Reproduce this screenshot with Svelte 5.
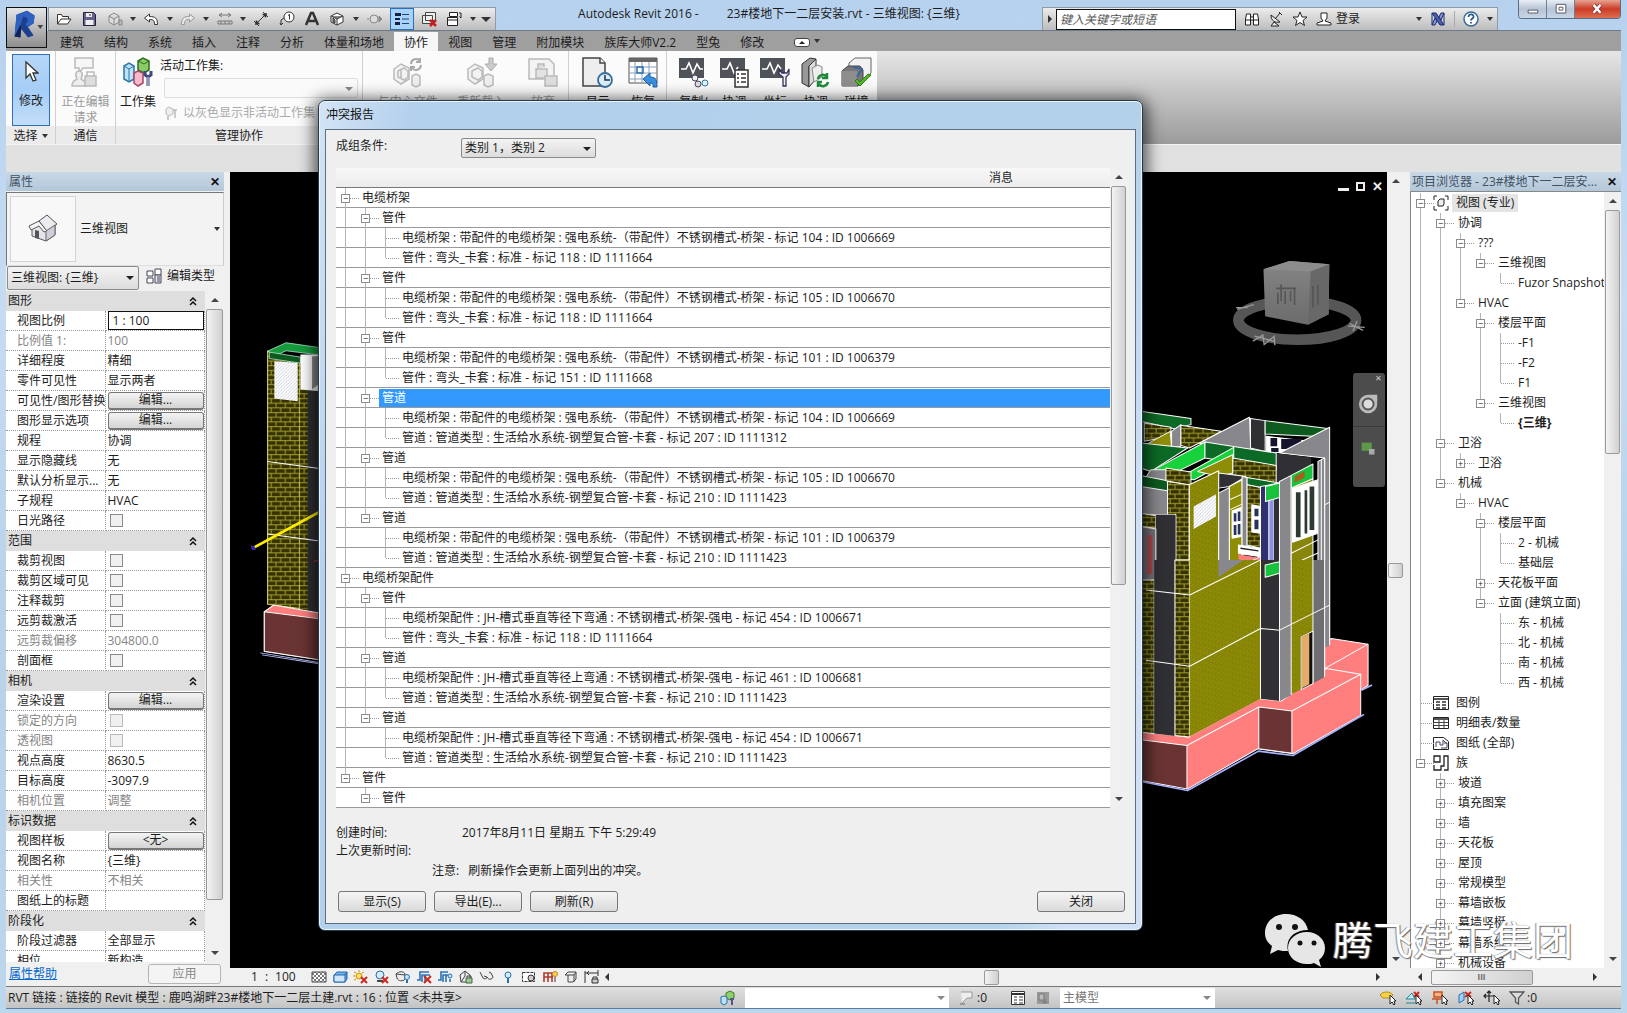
<script>
  const icons = {
    open: '<path d="M1.5 13V3.5h4l1 2h6V8M1.5 13 5 8h10l-3.500 5z" fill="#fff" stroke="#333"/>',
    save: '<path d="M2.500 1.500h10l2 2v11h-12z" fill="#62628a" stroke="#222240"/><path d="M5 2h6v4H5zM4.500 9h8v5h-8z" fill="#eee"/><path d="M9 3v2" stroke="#222" />',
    sync: '<path d="m2 5 5-3 5 3v6l-5 3-5-3zM7 8v6M2 5l5 3 5-3" fill="#ddd" stroke="#888"/><path d="M12 9h3v5h-3z" fill="#bbb" stroke="#888"/>',
    undo: '<path d="m1.500 7 5-4v2.500c6 0 8 2 8 8h-3c0-4-1-5-5-5V11z" fill="#fff" stroke="#333"/>',
    redo: '<path d="m14.500 7-5-4v2.500c-6 0-8 2-8 8h3c0-4 1-5 5-5V11z" fill="#e6e6e6" stroke="#999"/>',
    measure: '<path d="M2 4h12M2 4l3-2M2 4l3 2M14 4l-3-2M14 4l-3 2M1 10h14v3H1zM4 10v3M8 10v3M12 10v3" fill="none" stroke="#777"/>',
    dim: '<path d="M3 13 13 3M1 10l5 5M10 1l5 5" fill="none" stroke="#333"/><path d="m2 14 1-5 4 4zM14 2l-5 1 4 4z" fill="#333"/>',
    tag: '<circle cx="10" cy="6" r="5" fill="#fff" stroke="#333"/><path d="M9 4.500 10.500 3.500v5M5 7 2 9v5M1 12l1 2 2-2" fill="none" stroke="#333"/>',
    text: '<path d="M2 14 7 2h2l5 12M4.500 10h7" fill="none" stroke="#333" stroke-width="2.500"/>',
    cube: '<path d="m2 5 6-3 6 3v6l-6 3-6-3z" fill="#fff" stroke="#333"/><path d="M2 5l6 3 6-3M8 8v6M4 7v4l2 1V9z" fill="#888" stroke="#333"/>',
    section: '<circle cx="8" cy="8" r="4" fill="#ddd" stroke="#888"/><path d="m13 5 3 3-3 3zM1 8h2" fill="#888" stroke="#888"/>',
    thin: '<path d="M1 2h6v3H1zM1 7h5v2H1zM1 11h5v3H1z" fill="#124"/><path d="M8 3.500h7M8 8h7M8 12.500h7" stroke="#246" fill="none"/>',
    closewin: '<path d="M4.500 1.500h10v8h-10zM1.500 4.500h10v8h-10z" fill="#eee" stroke="#444"/><path d="m9 9 6 6m0-6-6 6" stroke="#c81e1e" stroke-width="2.500"/>',
    switchwin: '<path d="M3.500 1.500h8v4h-8zM1.500 6.500h10v8h-10z" fill="#fff" stroke="#222"/><path d="M1.500 9h10M13 2h2v5M13.500 5.500 15 7" fill="none" stroke="#222"/>',
    binoculars: '<path d="M2.500 3h4v11h-5V8zM13.500 3h-4v11h5V8zM6.500 6h3v3h-3zM2 9h4M10 9h4" fill="#fff" stroke="#222"/>',
    dish: '<path d="M3 4c0 6 4 8 9 7zM7 8l5-6M11 1l3 3M6 11l-3 4h8z" fill="#eee" stroke="#222"/>',
    star: '<path d="m8 1 2 5h5l-4 3.500 1.500 5L8 11.500l-4.500 3L5 9.500 1 6h5z" fill="#fff" stroke="#222"/>',
    person: '<path d="M5 2h6v5l-2 3 6 2v2H1v-2l6-2-2-3z" fill="#fff" stroke="#222"/>',
    exchange: '<path d="M2 2h4l8 12h-4z" fill="#4a5fae" stroke="#1d2c6e"/><path d="M14 2h-3L9 6l2 3zM2 14h3l2-4-2-3zM14 2v12M2 2v12" fill="#8796d2" stroke="#1d2c6e"/>',
    help: '<circle cx="8" cy="8" r="7" fill="#fff" stroke="#3a6a98" stroke-width="1.500"/><path d="M5.500 6c0-4 5.500-3 5 0-.3 1.500-2.500 1.500-2.500 3.500M8 11v1.500" fill="none" stroke="#24598c" stroke-width="1.800"/>',
    hatch: '<path d="M1 3h14v10H1z" fill="#fff" stroke="#444"/><path d="m1 6 3-3M1 10l7-7M2 13 12 3M6 13l9-9M10 13l5-5M4 3l10 10M8 3l7 7M12 3l3 3M1 4l9 9M1 8l5 5" stroke="#555" stroke-width=".8"/>',
    bluebox: '<path d="m2 6 3-3h10l-2 3v7H2z" fill="#74b4ea" stroke="#246bb0"/><path d="M2 6h11v7H2z" fill="#cfe6fa" stroke="#246bb0"/><path d="m13 6 2-3v7l-2 3" fill="#4b92d4" stroke="#246bb0"/>',
    sunoff: '<circle cx="6" cy="7" r="3" fill="#ffe06a" stroke="#d09000"/><path d="M6 1v2M1 3l2 1M1 11l2-1M11 3 9 4M0 7h2" stroke="#d09000"/><path d="m8 8 6 6m0-6-6 6" stroke="#cc2a1e" stroke-width="2"/>',
    shadowoff: '<circle cx="6" cy="6" r="4" fill="#d5eaf8" stroke="#2472a8"/><path d="M3 12h6" stroke="#444" stroke-width="2"/><path d="m8 8 6 6m0-6-6 6" stroke="#cc2a1e" stroke-width="2"/>',
    render: '<path d="M1 5c3-3 8-3 9 0v5c-2 3-7 2-8-1zM1 5l9 1" fill="#eee" stroke="#444"/><circle cx="12" cy="8" r="2.500" fill="#cfe6fa" stroke="#2472a8"/><path d="M12 11v3" stroke="#2472a8" stroke-width="2"/>',
    cropoff: '<path d="M1 11h3V3h9M6 13V6h8M9 14V6" fill="none" stroke="#2a72b8" stroke-width="1.600"/><path d="m8 7 7 7m0-7-7 7" stroke="#cc2a1e" stroke-width="2"/>',
    crop: '<path d="M1 11h3V3h7M6 13V6h5M9 13V6" fill="none" stroke="#2a72b8" stroke-width="1.600"/><circle cx="13" cy="7" r="2" fill="#cfe6fa" stroke="#2472a8"/><path d="M13 10v3" stroke="#2472a8" stroke-width="1.500"/>',
    lockview: '<path d="m2 6 5-4 5 4v7H3zM7 2v5l-4 6" fill="#eee" stroke="#444"/><path d="M8 9h6v5H8z" fill="#9fc79a" stroke="#3b6a3b"/><path d="M9 9V7h4v2" fill="none" stroke="#444"/>',
    glasses: '<path d="M1 3 4 9c3 2 4 0 4-1 1 3 5 3 6 0L12 4 10 3M8 8l-3-1" fill="#eee" stroke="#444"/>',
    bulb: '<circle cx="8" cy="6" r="3" fill="#d5eaf8" stroke="#2472a8"/><path d="M8 9v5" stroke="#2472a8" stroke-width="2"/>',
    tempview: '<path d="M1.500 3.500h12v9h-12z" fill="#fff" stroke="#333" stroke-dasharray="3 1"/><circle cx="10" cy="9" r="3" fill="#ccc" stroke="#333"/>',
    analytic: '<path d="M2 13V4h8v9M6 4v9M2 8h9" fill="none" stroke="#b03a2e" stroke-width="1.600"/><circle cx="13" cy="5" r="2.500" fill="#ffd35a" stroke="#c58a10"/><path d="M13 8v5" stroke="#777" stroke-width="1.500"/>',
    displace: '<path d="m2 6 3-3h8v7l-3 3H5V6zM5 6h6v7M11 6l2-3" fill="#eee" stroke="#444"/>',
    constrain: '<path d="M1 2v12M1 4h13M14 1v6M3 4l2-2M3 4l2 2" stroke="#333" fill="none"/><path d="M8 10h6v4H8z" fill="#ccc" stroke="#333"/><path d="M9 10V8h4v2" fill="none" stroke="#333"/>',
    worksets: '<path d="m6 3 4-2 4 2v5l-4 2-4-2z" fill="#8fd06a" stroke="#3a7a2a"/><path d="m1 7 3-1 3 1v6l-3 2-3-2z" fill="#bfe0f8" stroke="#2472a8"/><path d="M10 9h4M12 9v6" stroke="#55558a" stroke-width="2"/>',
    workgray: '<path d="m3 4 3-2 4 2v5l-4 2-3-2z" fill="#eee" stroke="#bbb"/><path d="M10 5h4M12 5v8M5 11v4" stroke="#bbb" stroke-width="1.500"/>',
    pinfilter: '<path d="M3 2h11v6H9l-5 5" fill="#eee" stroke="#999"/><path d="M2 13h5v2H2z" fill="#999"/>',
    designopt: '<path d="M1.500 1.500h13v13h-13z" fill="#fff" stroke="#333"/><path d="M2 4h12" stroke="#333" stroke-width="2"/><path d="M4 7h3M4 10h3M4 13h3M9 7h4M9 10h4M9 13h4" stroke="#333"/>',
    graybox: '<path d="M2 2h12v12H2z" fill="#999"/><path d="M4 4h5v6H4zM10 9v5M7 12h5" fill="#bbb" stroke="#777"/>',
    sel1: '<path d="M1 5c3-4 10-4 13 0l-3 3H4z" fill="#f5d24a" stroke="#b98a10"/>',
    sel2: '<path d="m1 9 6-6 3 6zM1 13h9" fill="#bfe8f0" stroke="#18899a"/><path d="m9 2 5 5m0-5L9 7" stroke="#cc2a1e" stroke-width="2"/>',
    sel3: '<path d="M3 2h8v5H3zM1 9h9M6 9v5" fill="#f7b48a" stroke="#c8501e" stroke-width="1.500"/>',
    sel4: '<path d="m2 5 5-3v8l-5 3z" fill="#9fd0f5" stroke="#2472a8"/><path d="m8 2 6 5m0-5L8 7" stroke="#cc2a1e" stroke-width="2"/>',
    sel5: '<path d="M6 1v11M1 6h11M4 3l2-2 2 2M3 4 1 6l2 2" fill="none" stroke="#222" stroke-width="1.200"/>',
    funnel: '<path d="M1 2h14L9.500 8v6l-3-2V8z" fill="#ddd" stroke="#555" stroke-width="1.300"/>',
    views: '<path d="M1 5V1h3M12 1h3v4M15 11v4h-3M4 15H1v-4" fill="none" stroke="#222"/><path d="m5 6 2-2h4v5l-1 2H5z" fill="#eee" stroke="#222"/>',
    legend: '<path d="M.5 1.500h15v13H.500z" fill="#fff" stroke="#222"/><path d="M1 4h14" stroke="#555" stroke-width="2"/><path d="M3 7h4M3 10h4M3 13h4M9 7h4M9 10h4M9 13h4" stroke="#333" stroke-width="1.500"/>',
    schedule: '<path d="M.5 2.500h15v11H.500z" fill="#fff" stroke="#222"/><path d="M1 4h14" stroke="#555" stroke-width="2"/><path d="M1 7.500h14M1 10.500h14M6 5v8M11 5v8" stroke="#444"/>',
    sheets: '<path d="M.5 2.500h10l5 4v8H.500z" fill="#fff" stroke="#222"/><path d="M3 12V7h4v3h3V5l4 4M11 8h3v5H8" fill="none" stroke="#446"/>',
    families: '<path d="M1 1h6v6H1zM1 10v5h7v-4h3V1h4v14h-4" fill="#fff" stroke="#222" stroke-width="1.300"/>',
    edittype: '<path d="M1 3h6v5H1zM9 1h6v6H9zM1 10h6v5H1z" fill="#fff" stroke="#445"/><path d="M9 7h6v8H9z" fill="#e5e8f4" stroke="#445"/><path d="M11 9h3M11 11h3M11 13h3" stroke="#445"/>'
  }

  const bigIcons = {
    request: '<path d="M5 1h18v10H13l-4 5v-5H5z" fill="#f6f6f6" stroke="#bbb" stroke-width="1.500"/><path d="M2 29c0-6 3-5 5-7-3-6 0-8 2-8s5 2 2 8c2 2 5 1 5 7z" fill="#eee" stroke="#bbb" stroke-width="1.500"/><path d="M15 19h11v10H15z" fill="#ddd" stroke="#bbb" stroke-width="1.500"/><path d="M17 19v-4h7v4" fill="none" stroke="#bbb" stroke-width="1.500"/>',
    worksets: '<path d="m15 4 5-3 6 3v9l-5 3-6-3z" fill="#8ccc66" stroke="#2d6e22" stroke-width="1.500"/><path d="m15 4 6 3 5-3" fill="none" stroke="#2d6e22"/><path d="m1 9 5-3 5 3v13l-5 3-5-3z" fill="#bfe2fa" stroke="#2a78a8" stroke-width="1.500"/><path d="m1 9 5 3 5-3M6 12v13" fill="none" stroke="#2a78a8"/><path d="m11 16 4-2 5 2v10l-5 3-4-3z" fill="#f6b9c9" stroke="#a34a66" stroke-width="1.500"/><path d="M22 14v4l3 2 3-2v-4M25 20v9" fill="none" stroke="#3f4a7a" stroke-width="3"/><path d="M25 20v9" stroke="#dde" />',
    gsync: '<path d="m2 12 7-5 8 4v11l-8 5-7-5zM9 12v9M6 14l6-3 4 3v6l-4 3-6-3z" fill="#f3f3f3" stroke="#bbb" stroke-width="1.500"/><path d="m20 19 4-2 4 2v9l-4 2-4-2z" fill="#eee" stroke="#bbb" stroke-width="1.500"/><path d="M19 7a5 5 0 0 1 9-3M29 8a5 5 0 0 1-9 3M28 1v4h-4M19 14v-4h4" fill="none" stroke="#aaa" stroke-width="2"/>',
    greload: '<path d="m2 12 7-5 8 4v11l-8 5-7-5zM6 14l6-3 4 3v6l-4 3-6-3z" fill="#f3f3f3" stroke="#bbb" stroke-width="1.500"/><path d="m18 19 4-2 5 2v9l-5 2-4-2z" fill="#eee" stroke="#bbb" stroke-width="1.500"/><path d="M23 1h4v6h4l-6 7-6-7h4z" fill="#ccc" stroke="#aaa"/>',
    grelease: '<path d="M1 2h20l5 5v15H1z" fill="#f3f3f3" stroke="#bbb" stroke-width="1.500"/><path d="M8 12h11v9H8z" fill="#e3e3e3" stroke="#bbb" stroke-width="1.500"/><path d="M10 12V7h6v3M17 19h12v10H17z" fill="#ddd" stroke="#bbb" stroke-width="1.500"/>',
    history: '<path d="M1 1h17l5 5v23H1z" fill="#eee" stroke="#444" stroke-width="1.500"/><path d="M18 1v5h5" fill="#fff" stroke="#444" stroke-width="1.500"/><circle cx="23" cy="23" r="7" fill="#dbeefa" stroke="#336e9c" stroke-width="1.800"/><path d="M23 18v5h5" fill="none" stroke="#234" stroke-width="1.500"/>',
    restore: '<path d="M1 1h28v25H1z" fill="#fff" stroke="#555"/><path d="M1 1h28v4H1z" fill="#666"/><path d="M1 10h28M1 16h28M1 22h28M7 5v21M14 5v21M21 5v21" stroke="#8ba0b5"/><path d="M9 10h6v6H9z" fill="none" stroke="#2471b8" stroke-width="1.500"/><path d="m15 22 7-6v4c6 0 7 3 7 10h-4c0-4 0-4-3-4v3z" fill="#3a8fe0" stroke="#1d62a5"/>',
    copy: '<path d="M1 1h25v20H1z" fill="#50525a"/><path d="M3 12h5l3-6 4 10 4-9 3 5h3" fill="none" stroke="#fff" stroke-width="1.600"/><circle cx="17" cy="21" r="3" fill="#eee" stroke="#446"/><circle cx="20" cy="27" r="3" fill="#ddd" stroke="#446"/><circle cx="27" cy="26" r="3" fill="#e4f2fa" stroke="#2a78a8"/>',
    review: '<path d="M1 1h25v20H1z" fill="#50525a"/><path d="M3 12h5l3-6 4 10 4-6" fill="none" stroke="#fff" stroke-width="1.600"/><path d="M16 13h13v17H16z" fill="#fff" stroke="#333" stroke-width="1.500"/><path d="M18 17h2M22 17h5M18 21h2M22 21h5M18 25h2M22 25h5" stroke="#333" stroke-width="1.500"/>',
    coord: '<path d="M1 1h25v20H1z" fill="#50525a"/><path d="M3 12h5l3-6 4 10 4-8 3 4" fill="none" stroke="#fff" stroke-width="1.600"/><path d="M20 12v5l4 3v9h3v-9l3-3v-5l-2 4h-5z" fill="#eef" stroke="#335" stroke-width="1.300"/>',
    host: '<path d="m2 7 8-6 6 1-7 7v21l-7-4z" fill="#999" stroke="#333"/><path d="m9 9 7-7v20l-7 8z" fill="#ddd" stroke="#333"/><path d="m12 11 6-3 4 2v10l-8 5z" fill="#eee" stroke="#888"/><path d="M18 22a5 5 0 0 1 9-2M28 25a5 5 0 0 1-9 2M27 16v5h-5M18 30v-5h4" fill="none" stroke="#1f8a3a" stroke-width="2.500"/>',
    clash: '<path d="m8 6 6-5h16v15l-6 6H8z" fill="#f2f2f2" stroke="#666"/><path d="m1 14 6-5h12l3 4v9l-5 7H1z" fill="#777" stroke="#444"/><path d="M1 14h15v15H1z" fill="#8d8d8d"/><path d="m12 10 9 2-5 8" fill="none" stroke="#2d62b0" stroke-width="1.500"/><path d="m14 24 5 5L30 18l-3-1-8 8-3-3z" fill="#57b82a" stroke="#2d7d12"/>'
  }

  const tabs = ['建筑', '结构', '系统', '插入', '注释', '分析', '体量和场地', '协作', '视图', '管理', '附加模块', '族库大师V2.2', '型兔', '修改']

  const quickTools = [
    { icon: 'open' }, { icon: 'save' }, { icon: 'sync', menu: true }, { icon: 'undo', menu: true },
    { icon: 'redo', menu: true }, { icon: 'measure', menu: true }, { icon: 'dim' }, { icon: 'tag' },
    { icon: 'text' }, { icon: 'cube', menu: true }, { icon: 'section' }, { icon: 'thin', on: true },
    { icon: 'closewin' }, { icon: 'switchwin', menu: true }
  ]

  const syncTools = [
    { icon: 'gsync', label: '与中心文件' },
    { icon: 'greload', label: '重新载入' },
    { icon: 'grelease', label: '放弃' }
  ]
  const modelTools = [
    { icon: 'history', label: '显示' },
    { icon: 'restore', label: '恢复' }
  ]
  const coordTools = [
    { icon: 'copy', label: '复制/' },
    { icon: 'review', label: '协调' },
    { icon: 'coord', label: '坐标' },
    { icon: 'host', label: '协调' },
    { icon: 'clash', label: '碰撞' }
  ]

  const groups = [
    { name: '图形', rows: [
      { k: '视图比例', v: '1 : 100', type: 'input' },
      { k: '比例值 1:', v: '100', off: true },
      { k: '详细程度', v: '精细' },
      { k: '零件可见性', v: '显示两者' },
      { k: '可见性/图形替换', v: '编辑...', type: 'button' },
      { k: '图形显示选项', v: '编辑...', type: 'button' },
      { k: '规程', v: '协调' },
      { k: '显示隐藏线', v: '无' },
      { k: '默认分析显示...', v: '无' },
      { k: '子规程', v: 'HVAC' },
      { k: '日光路径', type: 'check' }
    ] },
    { name: '范围', rows: [
      { k: '裁剪视图', type: 'check' },
      { k: '裁剪区域可见', type: 'check' },
      { k: '注释裁剪', type: 'check' },
      { k: '远剪裁激活', type: 'check' },
      { k: '远剪裁偏移', v: '304800.0', off: true },
      { k: '剖面框', type: 'check' }
    ] },
    { name: '相机', rows: [
      { k: '渲染设置', v: '编辑...', type: 'button' },
      { k: '锁定的方向', type: 'check', off: true },
      { k: '透视图', type: 'check', off: true },
      { k: '视点高度', v: '8630.5' },
      { k: '目标高度', v: '-3097.9' },
      { k: '相机位置', v: '调整', off: true }
    ] },
    { name: '标识数据', rows: [
      { k: '视图样板', v: '<无>', type: 'button' },
      { k: '视图名称', v: '{三维}' },
      { k: '相关性', v: '不相关', off: true },
      { k: '图纸上的标题', v: '' }
    ] },
    { name: '阶段化', rows: [
      { k: '阶段过滤器', v: '全部显示' },
      { k: '相位', v: '新构造' }
    ] }
  ]

  // each row: [depth, text, expander, icon]
  const browserRows = [
    [0, '视图 (专业)', '-', 'views'],
    [1, '协调', '-'],
    [2, '???', '-'],
    [3, '三维视图', '-'],
    [4, 'Fuzor Snapshot'],
    [2, 'HVAC', '-'],
    [3, '楼层平面', '-'],
    [4, '-F1'],
    [4, '-F2'],
    [4, 'F1'],
    [3, '三维视图', '-'],
    [4, '{三维}'],
    [1, '卫浴', '-'],
    [2, '卫浴', '+'],
    [1, '机械', '-'],
    [2, 'HVAC', '-'],
    [3, '楼层平面', '-'],
    [4, '2 - 机械'],
    [4, '基础层'],
    [3, '天花板平面', '+'],
    [3, '立面 (建筑立面)', '-'],
    [4, '东 - 机械'],
    [4, '北 - 机械'],
    [4, '南 - 机械'],
    [4, '西 - 机械'],
    [0, '图例', '', 'legend'],
    [0, '明细表/数量', '', 'schedule'],
    [0, '图纸 (全部)', '', 'sheets'],
    [0, '族', '-', 'families'],
    ...['坡道', '填充图案', '墙', '天花板', '屋顶', '常规模型', '幕墙嵌板', '幕墙竖梃', '幕墙系统', '机械设备'].map((t) => [1, t, '+'])
  ]

  const tray = (mark, id) => `电缆桥架 : 带配件的电缆桥架 : 强电系统-（带配件）不锈钢槽式-桥架 - 标记 ${mark} : ID ${id}`
  const fitting = (dir, mark, id) => `电缆桥架配件 : JH-槽式垂直等径${dir}弯通 : 不锈钢槽式-桥架-强电 - 标记 ${mark} : ID ${id}`
  const elbow = (mark, id) => `管件 : 弯头_卡套 : 标准 - 标记 ${mark} : ID ${id}`
  const pipe = (mark, id) => `管道 : 管道类型 : 生活给水系统-钢塑复合管-卡套 - 标记 ${mark} : ID ${id}`

  const clash = (name, a, b) => [[1, name, '-'], [2, a], [2, b]]

  const reportRows = [
    [0, '电缆桥架', '-'],
    ...clash('管件', tray(104, 1006669), elbow(118, 1111664)),
    ...clash('管件', tray(105, 1006670), elbow(118, 1111664)),
    ...clash('管件', tray(101, 1006379), elbow(151, 1111668)),
    ...clash('管道', tray(104, 1006669), pipe(207, 1111312)),
    ...clash('管道', tray(105, 1006670), pipe(210, 1111423)),
    ...clash('管道', tray(101, 1006379), pipe(210, 1111423)),
    [0, '电缆桥架配件', '-'],
    ...clash('管件', fitting('下', 454, 1006671), elbow(118, 1111664)),
    ...clash('管道', fitting('上', 461, 1006681), pipe(210, 1111423)),
    ...clash('管道', fitting('下', 454, 1006671), pipe(210, 1111423)),
    [0, '管件', '-'],
    [1, '管件', '-']
  ]

  // a vertical guide runs through a column while that level still has siblings below
  function withGuides(rows) {
    return rows.map(([depth, text, exp, icon], i) => {
      const guides = []
      for (let d = 0; d <= depth; d++) {
        const next = rows.slice(i + 1).find((r) => r[0] <= d)
        guides.push(!!next && next[0] === d)
      }
      return { depth, text, exp, icon, guides, first: i === 0 }
    })
  }

  const browser = withGuides(browserRows)
  const report = withGuides(reportRows)

  const viewTools = ['hatch', 'bluebox', 'sunoff', 'shadowoff', 'render', 'cropoff', 'crop', 'lockview', 'glasses', 'bulb', 'tempview', 'analytic', 'displace', 'constrain']
  const pickTools = ['sel1', 'sel2', 'sel3', 'sel4', 'sel5']

  let selected = 10
</script>

{#snippet icon(name)}
  <svg class="icon" viewBox="0 0 16 16" aria-hidden="true">{@html icons[name]}</svg>
{/snippet}

{#snippet bigTool(t, off)}
  <button class="big-tool" class:off>
    <svg class="big-icon" viewBox="0 0 31 31" aria-hidden="true">{@html bigIcons[t.icon]}</svg>
    <span>{t.label}</span>
  </button>
{/snippet}

{#snippet treeRow(row)}
  <div class="tree-row">
    {#each row.guides as more, d}
      {#if d < row.depth}
        <span class="cell" class:line={more}></span>
      {:else}
        <span class="cell node" class:line={more} class:top={!row.first} class:last={!more}>
          {#if row.exp}<button class="exp" aria-label="toggle">{row.exp === '-' ? '−' : '+'}</button>{/if}
        </span>
      {/if}
    {/each}
    {#if row.icon}<span class="row-icon">{@render icon(row.icon)}</span>{/if}
    <span class="row-text" class:iconed={row.icon} class:root={row.first && row.icon} class:strong={row.text === '{三维}'}>{row.text}</span>
  </div>
{/snippet}

<div class="app">
  <header>
    <button class="app-button" aria-label="Revit">
      <svg viewBox="0 0 41 40">
        <path d="M8 30 10 7l11-4 8 5-1 8-6 4 6 9-6 2-7-9-1 9z" fill="#1d3f8c" />
        <path d="m10 7 11-4 8 5-1 8-6 4-3-3 3-3-1-4-4-1-3 9-6 12z" fill="#2f62c0" />
        <path d="m8 30 6-12 1 4-1 9z" fill="#0f2458" />
        <path d="M32 18h6l-3 4z" fill="#444" />
      </svg>
    </button>
    <div class="titlebar">
      <div class="quick">
        {#each quickTools as t}
          <button class:on={t.on} aria-label={t.icon}>{@render icon(t.icon)}</button>
          {#if t.menu}<i class="caret"></i>{/if}
        {/each}
        <i class="caret more"></i>
      </div>
      <h1><span>Autodesk Revit 2016 -</span><span>23#楼地下一二层安装.rvt - 三维视图: {'{三维}'}</span></h1>
      <div class="info">
        <i class="arrow-right"></i>
        <input type="text" placeholder="键入关键字或短语" aria-label="键入关键字或短语" />
        {#each ['binoculars', 'dish', 'star'] as name}
          <button aria-label={name}>{@render icon(name)}</button>
        {/each}
        <button class="login">{@render icon('person')}<span>登录</span></button>
        <i class="caret"></i>
        <button aria-label="exchange">{@render icon('exchange')}</button>
        <button class="help" aria-label="help">{@render icon('help')}</button>
        <i class="caret"></i>
      </div>
      <div class="win-buttons">
        <button aria-label="minimize"><svg viewBox="0 0 28 18"><path d="M9.500 10.500h10v3h-10z" fill="#fff" stroke="#556" /></svg></button>
        <button aria-label="maximize"><svg viewBox="0 0 28 18"><path d="M9.500 4.500h10v9h-10zM12.500 7.500h4v3h-4z" fill="#fff" stroke="#556" /></svg></button>
        <button class="close" aria-label="close"><svg viewBox="0 0 46 18"><path d="m19 5 7 8m0-8-7 8" stroke="#7a3030" stroke-width="4" /><path d="m19 5 7 8m0-8-7 8" stroke="#fff" stroke-width="2.500" /></svg></button>
      </div>
    </div>
    <nav class="tabs">
      {#each tabs as tab}
        <button class:active={tab === '协作'}>{tab}</button>
      {/each}
      <span class="tab-toggle"></span><i class="caret"></i>
    </nav>
  </header>

  <div class="ribbon">
    <div class="panels">
      <section class="p-select">
        <div class="body">
          <button class="modify">
            <svg viewBox="0 0 16 24"><path d="M3 2v16l4-4 3 7 3-1-3-7h5z" fill="#fff" stroke="#333" stroke-width="1.300" /></svg>
            <span>修改</span>
          </button>
        </div>
        <footer>选择 <i class="caret"></i></footer>
      </section>
      <section class="p-comm">
        <div class="body">
          <button class="big-tool off wide">
            <svg class="big-icon" viewBox="0 0 31 31">{@html bigIcons.request}</svg>
            <span>正在编辑<br />请求</span>
          </button>
        </div>
        <footer>通信</footer>
      </section>
      <section class="p-manage">
        <div class="body">
          {@render bigTool({ icon: 'worksets', label: '工作集' }, false)}
          <div class="active-set">
            <label for="workset">活动工作集:</label>
            <div class="select flat"><select id="workset"><option></option></select></div>
            <button class="gray-toggle">{@render icon('workgray')}以灰色显示非活动工作集</button>
          </div>
        </div>
        <footer>管理协作</footer>
      </section>
      <section class="p-sync">
        <div class="body">{#each syncTools as t}{@render bigTool(t, true)}{/each}</div>
        <footer>同步</footer>
      </section>
      <section class="p-model">
        <div class="body">{#each modelTools as t}{@render bigTool(t, false)}{/each}</div>
        <footer>管理模型</footer>
      </section>
      <section class="p-coord">
        <div class="body">{#each coordTools as t}{@render bigTool(t, false)}{/each}</div>
        <footer>坐标</footer>
      </section>
    </div>
  </div>
  <div class="options-bar"></div>

  <main>
    <aside class="properties">
      <div class="palette-title"><span>属性</span><button aria-label="close">✕</button></div>
      <button class="type-selector">
        <span class="thumb">
          <svg viewBox="0 0 32 32">
            <path d="m5 15 8-6 15 1v12l-9 6-14-5z" fill="#e4e4ec" stroke="#555" />
            <path d="m2 13 10-5 8 10-3 1-5-6-8 4z" fill="#f6f6f6" stroke="#555" />
            <path d="m12 8 8-6 10 9-10 7z" fill="#ececf0" stroke="#555" />
            <path d="M8 17l4 1v8l-4-1z" fill="#555" />
            <path d="M19 18v10l9-6V12z" fill="#cfcfdb" stroke="#666" />
          </svg>
        </span>
        <span class="type-name">三维视图</span>
        <i class="caret"></i>
      </button>
      <div class="instance">
        <div class="select"><select aria-label="实例"><option>三维视图: {'{三维}'}</option></select></div>
        <button class="edit-type">{@render icon('edittype')}编辑类型</button>
      </div>
      <div class="prop-scroll">
        <div class="prop-view">
          <table>
            {#each groups as g, gi}
              <tbody>
                <tr class="group"><th colspan="2"><span>{g.name}</span>
                  <svg viewBox="0 0 8 10"><path d="m1 5 3-3 3 3M1 9l3-3 3 3" fill="none" stroke="#111" stroke-width="1.500" /></svg>
                </th></tr>
                {#each g.rows as r, ri}
                  <tr class:off={r.off}>
                    <td><label for="p{gi}-{ri}">{r.k}</label></td>
                    <td>
                      {#if r.type === 'check'}
                        <input id="p{gi}-{ri}" type="checkbox" disabled={r.off} />
                      {:else if r.type === 'button'}
                        <button id="p{gi}-{ri}" class="cell-button">{r.v}</button>
                      {:else if r.type === 'input'}
                        <input id="p{gi}-{ri}" class="cell-input" type="text" value={r.v} />
                      {:else}
                        <output id="p{gi}-{ri}">{r.v}</output>
                      {/if}
                    </td>
                  </tr>
                {/each}
              </tbody>
            {/each}
          </table>
        </div>
        <div class="vbar"><i class="up"></i><div class="track"><b class="prop-thumb"></b></div><i class="down"></i></div>
      </div>
      <div class="prop-footer"><a href="#help">属性帮助</a><button disabled>应用</button></div>
    </aside>

    <div class="view">
      <div class="canvas-row">
        <div class="canvas">
          <svg class="scene" viewBox="230 173 1157 794" preserveAspectRatio="xMidYMid slice" aria-hidden="true">
            <defs>
              <pattern id="brick" width="28" height="28" patternUnits="userSpaceOnUse">
                <path d="M0 0h28v28H0z" fill="#353200" />
                <path d="M0 2h28M0 16h28M6 2v14M20 16v14" stroke="#b9b43a" stroke-width="2.500" />
              </pattern>
              <pattern id="olive" width="20" height="16" patternUnits="userSpaceOnUse" patternTransform="skewY(-28)">
                <path d="M0 0h20v16H0z" fill="#8f8d06" />
                <path d="M0 1h20M0 9h20M4 1v8M14 9v8" stroke="#7b7905" stroke-width="2" />
              </pattern>
              <pattern id="dots" width="10" height="10" patternUnits="userSpaceOnUse">
                <path d="M0 0h10v10H0z" fill="#fff" />
                <path d="m1 4 4-3M6 9l4-3" stroke="#7c84a0" stroke-width="1.500" />
              </pattern>
              <linearGradient id="cubeface" x1="0" y1="0" x2="0" y2="1">
                <stop offset="0" stop-color="#858585" /><stop offset="1" stop-color="#6c6c6c" />
              </linearGradient>
            </defs>

            <g transform="translate(0 165) scale(.33333)" stroke-width="3">
              <path d="M807 560 903 590V1330L807 1318z" fill="url(#brick)" stroke="#e8e36a" />
              <path d="M903 590l54 20v730l-54-10z" fill="url(#brick)" stroke="none" />
              <path d="M927 675h40v670l-40-10z" fill="#303034" />
              <path d="M807 560 862 535l105 15v22l-105-13-30 14z" fill="#169a3c" stroke="#cfe" stroke-width="2" />
              <path d="M812 563 905 578v18l-93-14z" fill="#0d5a1e" stroke="#cfe" stroke-width="2" />
              <path d="M905 570h60v110l-60-5z" fill="#fff" />
              <path d="M940 575v100l25-20V575z" fill="#888" />
              <path d="M827 590l70 5v115l-70-8z" fill="url(#dots)" />
              <path d="M807 890l160 22M807 1107l160 22" stroke="#fff" fill="none" />
              <path d="M797 1340 825 1320 970 1345V1485L797 1458z" fill="#ff7f7f" stroke="#fff" />
              <path d="M797 1340 970 1362V1485L797 1458z" fill="#6b3434" stroke="#fff" />
              <path d="M785 1463l185 30M790 1469l180 28" stroke="#bfc4ff" fill="none" />
              <path d="M762 1150 970 1037" stroke="#ffee00" stroke-width="8" />
              <path d="M758 1143l12 12M945 1190l15-6" stroke="#e33" />
              <circle cx="764" cy="1149" r="6" fill="#2a2ad0" />
            </g>

            <g transform="translate(1130 405) scale(.33333)" stroke="#fff" stroke-width="3" stroke-linejoin="round">
              <path d="M205 115 355 38 360 150 250 130z" fill="#88878b" />
              <path d="M358 42 402 48V140L358 130z" fill="#303034" />
              <path d="M402 48 595 72 545 95 402 88z" fill="#0d5a1e" />
              <path d="M405 95 520 108V150L405 140z" fill="#fff" />
              <path d="M418 100h20v25h-20zM450 103h60v30h-60zM420 130h22v12h-22z" fill="#14142c" stroke="none" />
              <path d="M445 145 595 68V800L580 790V160z" fill="#88878b" />
              <path d="M430 145l110 13v100l-110-20z" fill="#303034" stroke="none" />
              <path d="M30 20 180 42V60L130 72 30 50z" fill="#0d6a26" />
              <path d="M40 55 120 68V95L40 110z" fill="url(#brick)" />
              <path d="M45 120 118 80 122 130z" fill="#8f8d06" />
              <path d="M122 80 150 60V125L122 130z" fill="#88878b" />
              <path d="M150 62 270 80 205 115 175 130 150 122z" fill="url(#brick)" />
              <path d="M30 115 170 130 60 200 30 190z" fill="#0d6a26" />
              <path d="M60 200 222 112V160L140 200z" fill="#18d23c" />
              <path d="M222 112 435 145V195L222 160z" fill="#0d6a26" />
              <path d="M305 160 435 182V240L305 210z" fill="url(#brick)" />
              <path d="M140 222 308 128V160L190 225z" fill="#18d23c" />
              <path d="M200 200 305 150V205L265 215z" fill="#8f8d06" />
              <path d="M30 240 60 195 140 195 165 235V330H30z" fill="#88878b" />
              <path d="M30 212 110 228V258L30 245z" fill="#0d5a1e" />
              <path d="M105 190l75 12v40l-75-14z" fill="url(#brick)" />
              <path d="M110 230 175 240V540H135V330H110z" fill="url(#brick)" />
              <path d="M30 325 75 333V370L30 365z" fill="url(#brick)" />
              <path d="M75 330h58v230H75z" fill="#303034" stroke="none" />
              <path d="M30 365 75 372V525L30 530z" fill="#77727a" />
              <path d="M50 390l14 2v115H50z" fill="#b04a4a" stroke="none" />
              <path d="M175 240 263 198V560H175z" fill="url(#olive)" />
              <path d="M188 305 255 268V335L188 372z" fill="url(#dots)" stroke="none" />
              <path d="M263 265 295 248V495L263 515z" fill="#88878b" />
              <path d="M263 205 345 215 295 245 263 250z" fill="#303034" />
              <path d="M295 245 333 225V470L295 490z" fill="#8f8d06" />
              <path d="M295 285 333 268M295 315l38-17" fill="none" />
              <path d="M303 318 330 308V395L303 400z" fill="#fff" />
              <path d="M308 325h8v25h-8zM320 320h8v28h-8zM308 360h8v30h-8zM320 357h8v32h-8z" fill="#26325a" stroke="none" />
              <path d="M333 215 348 218V440L333 450z" fill="#88878b" />
              <path d="M348 218 445 235 400 250 348 240z" fill="#0d6a26" />
              <path d="M348 240 388 248V430L348 420z" fill="url(#brick)" />
              <path d="M362 300l26 5v80l-26-4z" fill="#fff" />
              <path d="M370 312h12v22h-12zM370 345h12v28h-12z" fill="#26325a" stroke="none" />
              <path d="M175 570 263 515 388 455V560L175 590z" fill="url(#olive)" stroke="none" />
              <path d="M322 420l65 10v25l-65-10z" fill="#fff" />
              <path d="M328 428l54 8v4l-54-8z" fill="#222" stroke="none" />
              <path d="M322 448l62 10 60 10-70 12-52-18z" fill="#ff7f7f" stroke="none" />
              <path d="M263 515 388 455" fill="none" />
              <path d="M388 245 445 235V475L388 480z" fill="#303070" />
              <path d="M413 242 428 240V478H413z" fill="#8e8ee8" />
              <path d="M403 245 445 235V278L403 290z" fill="#18c23c" />
              <path d="M428 285h17v190h-17z" fill="#303034" stroke="none" />
              <path d="M388 480 445 475V560H388z" fill="#303034" stroke="none" />
              <path d="M403 485 445 475V505L403 515z" fill="#18c23c" />
              <path d="M445 230 480 212V560H445z" fill="#88878b" />
              <path d="M480 212 545 178V222L480 250z" fill="#18c23c" />
              <path d="M490 215l30-16v20l-30 15z" fill="#a0621c" stroke="none" />
              <path d="M480 250 545 222V560H480z" fill="#88860a" />
              <path d="M484 250 560 225V385L484 412z" fill="#fff" />
              <path d="M494 262h14v135h-14zM520 256h8v130h-8zM535 245h14v130h-14z" fill="#2e3a30" stroke="none" />
              <path d="M480 445 580 395M480 480l100-45" fill="none" />
              <path d="M560 170 580 160V560H560z" fill="#88878b" />
              <path d="M570 165v395M580 300l15-8" fill="none" />
            </g>

            <g transform="translate(1130 560) scale(.33333)" stroke="#fff" stroke-width="3" stroke-linejoin="round">
              <path d="M580 250 600 235 710 252V375L690 388 580 340z" fill="#ff7f7f" />
              <path d="M580 325 710 252" fill="none" />
              <path d="M30 513 170 530 385 415 450 422 585 325 688 342V465L485 580 380 565 170 685 30 660z" fill="#ff7f7f" />
              <path d="M30 538 168 555V685L30 660zM383 440 482 452V578L383 565z" fill="#6b3434" />
              <path d="M168 555 383 440M482 452 688 342" fill="none" />
              <path d="M30 60h40v460l-40-5z" fill="url(#brick)" />
              <path d="M70 60V0h62v527l-62-8z" fill="#303034" stroke="none" />
              <path d="M132 0h44v530l-44-5z" fill="url(#brick)" />
              <path d="M176 0h212v415L176 528z" fill="url(#olive)" stroke="none" />
              <path d="M262 0h75l-75 52z" fill="#88878b" stroke="none" />
              <path d="M388 0h57v422l-57-7z" fill="#303034" stroke="none" />
              <path d="M402 15 445 5V40L402 52z" fill="#18c23c" />
              <path d="M445 0h35v405l-35 17z" fill="#88878b" stroke="none" />
              <path d="M480 0h65v370l-65 32z" fill="url(#olive)" stroke="none" />
              <path d="M545 0h35v350l-35 20z" fill="#6f6e72" stroke="none" />
              <path d="M580 0h15v255l-15 8z" fill="#88878b" stroke="none" />
              <path d="M388 0v415M445 0v422M480 0v403M545 0v370M580 0v350M595 0v255" fill="none" />
              <path d="M510 230 545 213V370L510 388z" fill="#101010" />
              <path d="M512 230l22-10v152l-22 12z" fill="#e4ac68" stroke="none" />
              <path d="M45 90 176 105 388 0M45 300 176 318 388 205 445 210 595 135" fill="none" />
              <path d="M30 663 170 690 382 572 485 585 698 462M690 390l32-16" stroke="#a9b4ff" stroke-width="5" fill="none" />
            </g>

            <!-- view cube with compass ring -->
            <g transform="translate(1130 165) scale(.33333)">
              <ellipse cx="498" cy="468" rx="176" ry="58" fill="none" stroke="#565656" stroke-width="32" />
              <path d="M318 435l50-14M315 430h35M650 485l50 4M655 478l40 20M665 500l12-30M365 530l30-18 4 28 30-24 2 26M370 515l60 16" stroke="#999" stroke-width="4" fill="none" />
              <path d="M397 315 475 290 594 300 592 450 530 481 402 456z" fill="url(#cubeface)" />
              <path d="M397 315 475 290 594 300 538 322z" fill="#8c8c8c" />
              <path d="M538 322 594 300 592 450 530 481z" fill="#686868" />
              <path d="M435 372h60M450 360v50M440 385v35M462 380v40M478 380v30M490 372v50M545 365v65M560 362v60" stroke="#565656" stroke-width="5" fill="none" />
            </g>
          </svg>
          <div class="mdi"><span class="mdi-min"></span><span class="mdi-max"></span><span class="mdi-x">✕</span></div>
          <div class="navbar">
            <span class="nav-x">✕</span>
            <svg viewBox="0 0 24 24"><circle cx="11" cy="12" r="10" fill="#bbb" /><path d="M12 2h9v9z" fill="#bbb" /><circle cx="11" cy="12" r="6" fill="#ddd" stroke="#555" stroke-width="2" /></svg>
            <hr />
            <svg viewBox="0 0 24 24"><path d="M4 5h11v9H4z" fill="#5c9a4a" /><path d="M12 12h6v6h-6z" fill="#aaa" /></svg>
          </div>
        </div>
        <div class="vbar main"><i class="up"></i><div class="track"><b class="view-thumb"></b></div><i class="down"></i></div>
      </div>
      <div class="view-bar">
        <span class="scale"><span>1</span><span>:</span><span>100</span></span>
        {#each viewTools as name}
          <button aria-label={name}>{@render icon(name)}</button>
        {/each}
        <i class="left"></i>
        <div class="hbar"><b></b></div>
        <i class="right"></i>
      </div>
    </div>

    <aside class="browser">
      <div class="palette-title"><span>项目浏览器 - 23#楼地下一二层安...</span><button aria-label="close">✕</button></div>
      <div class="browser-body">
        <div class="tree">{#each browser as row}{@render treeRow(row)}{/each}</div>
        <div class="vbar"><i class="up"></i><div class="track"><b class="tree-thumb"></b></div><i class="down"></i></div>
      </div>
      <div class="browser-hbar"><i class="left"></i><b>III</b><i class="right"></i></div>
    </aside>
  </main>

  <div class="status">
    <span class="message">RVT 链接 : 链接的 Revit 模型 : 鹿鸣湖畔23#楼地下一二层土建.rvt : 16 : 位置 &lt;未共享&gt;</span>
    {@render icon('worksets')}
    <div class="select plain ws"><select aria-label="工作集"><option></option></select></div>
    <span class="count">{@render icon('pinfilter')}:0</span>
    {@render icon('designopt')}
    {@render icon('graybox')}
    <div class="select plain opt"><select aria-label="设计选项"><option>主模型</option></select></div>
    <div class="picks">
      {#each pickTools as name}
        <button aria-label={name}>
          {@render icon(name)}
          <svg class="pointer" viewBox="0 0 8 12"><path d="M1 1v9l2-2 2 3 1-1-1-3h2z" fill="#fff" stroke="#222" /></svg>
        </button>
      {/each}
      <span class="count">{@render icon('funnel')}:0</span>
    </div>
  </div>

  <div class="dialog" role="dialog" aria-labelledby="dlg-title">
    <h2 id="dlg-title">冲突报告</h2>
    <div class="dlg-body">
      <div class="group-by">
        <label for="group-by">成组条件:</label>
        <div class="select"><select id="group-by"><option>类别 1，类别 2</option></select></div>
      </div>
      <div class="report">
        <table>
          <thead><tr><th>消息</th></tr></thead>
          <tbody>
            {#each report as row, i}
              <tr class:selected={i === selected} on:click={() => (selected = i)}><td>{@render treeRow(row)}</td></tr>
            {/each}
          </tbody>
        </table>
        <div class="vbar"><i class="up"></i><div class="track"><b class="report-thumb"></b></div><i class="down"></i></div>
      </div>
      <dl>
        <dt>创建时间:</dt><dd>2017年8月11日 星期五 下午 5:29:49</dd>
        <dt>上次更新时间:</dt><dd></dd>
      </dl>
      <p class="note"><span>注意:</span><span>刷新操作会更新上面列出的冲突。</span></p>
      <div class="actions">
        <button>显示(S)</button>
        <button>导出(E)...</button>
        <button>刷新(R)</button>
        <button class="dlg-close">关闭</button>
      </div>
    </div>
  </div>

  <div class="watermark">
    <svg viewBox="0 0 62 54" aria-hidden="true">
      <path d="M22 1C10 1 1 9 1 20c0 6 3 10 7 13l-2 8 8-4c3 1 6 1 10 1-3-12 6-21 20-21C42 7 33 1 22 1z" fill="#e6e6e6" />
      <path d="M43 19c-11 0-19 7-19 16s8 16 19 16c3 0 5 0 7-1l7 4-2-7c4-3 6-7 6-12 0-9-8-16-18-16z" fill="#e6e6e6" />
      <circle cx="15" cy="14" r="3" fill="#111" /><circle cx="31" cy="14" r="3" fill="#111" />
      <circle cx="36" cy="30" r="2.500" fill="#111" /><circle cx="50" cy="30" r="2.500" fill="#111" />
    </svg>
    <span>腾飞建工集团</span>
  </div>
</div>

<style>
  :global(body) {
    margin: 0;
  }

  .app,
  .app * {
    box-sizing: border-box;
  }

  .app {
    position: relative;
    display: flex;
    flex-direction: column;
    height: 100vh;
    overflow: hidden;
    padding: 0 6px 4px 6px;
    background: linear-gradient(#b6d1ee, #c6dcf2 30%, #b9d2ea 60%, #bcd6ec);
    color: #1c1c1c;
    font-family: "Open Sans", "Noto Sans CJK SC", sans-serif;
    font-size: 12px;
    line-height: 16px;
  }

  button,
  input,
  select {
    font: inherit;
    color: inherit;
    margin: 0;
    padding: 0;
    border: 0;
    background: none;
  }

  .icon {
    flex: none;
    display: block;
    width: 16px;
    height: 16px;
  }

  .caret {
    flex: none;
    width: 0;
    height: 0;
    border: 3px solid transparent;
    border-top: 4px solid #333;
    border-bottom: 0;
  }

  .up,
  .down,
  .left,
  .right,
  .arrow-right {
    flex: none;
    width: 0;
    height: 0;
    border: 4px solid transparent;
  }

  .up { border-bottom-color: #444; border-top: 0; }
  .down { border-top-color: #444; border-bottom: 0; }
  .left { border-right-color: #333; border-left: 0; }
  .right,
  .arrow-right { border-left-color: #333; border-right: 0; }

  /* header */
  header {
    display: grid;
    grid-template: 31px 20px / 42px 1fr;
    background: linear-gradient(transparent 31px, #9f9f9f 31px);
  }

  .app-button {
    grid-row: 1 / 3;
    width: 41px;
    height: 41px;
    margin-top: 7px;
    border: 1px solid #111;
    background: linear-gradient(#e6e6e6, #8e8e8e);
  }

  .app-button svg {
    display: block;
    width: 100%;
  }

  .titlebar {
    display: flex;
    align-items: flex-end;
    border-bottom: 1px solid #6d7c8c;
  }

  .quick,
  .info {
    flex: none;
    display: flex;
    align-items: center;
    height: 23px;
    background: linear-gradient(#ececec, #bcbcbc);
    border: 1px solid #8f9ba8;
    border-bottom: 0;
  }

  .quick {
    width: 448px;
    justify-content: space-between;
    padding: 0 4px 0 5px;
  }

  .quick button {
    padding: 2px;
  }

  .quick .on {
    border: 1px solid #2a70c0;
    background: #a9d2fb;
    padding: 2px 3px;
  }

  .quick .more {
    border-width: 5px 5px 0;
  }

  h1 {
    flex: 1;
    display: flex;
    justify-content: center;
    gap: 28px;
    margin: 0 0 8px;
    font-size: 12px;
    line-height: 16px;
    font-weight: 400;
    white-space: nowrap;
  }

  .info {
    width: 456px;
    gap: 8px;
    padding-right: 4px;
    margin-right: 20px;
  }

  .info .arrow-right {
    margin-left: 5px;
    margin-right: -4px;
  }

  .info input {
    width: 180px;
    height: 21px;
    padding: 0 3px;
    border: 1px solid #111;
    background: #fff;
    font-style: italic;
  }

  .info input::placeholder {
    color: #555;
    opacity: 1;
  }

  .login {
    display: flex;
    gap: 4px;
    margin-right: auto;
  }

  .help {
    border-left: 1px solid #aaa;
    padding-left: 8px;
  }

  .win-buttons {
    flex: none;
    display: flex;
    align-self: flex-start;
    border: 1px solid #5a6f86;
    border-top: 0;
    border-radius: 0 0 4px 4px;
    overflow: hidden;
  }

  .win-buttons button {
    width: 28px;
    height: 18px;
    background: linear-gradient(#e8eef5, #b7c4d6 50%, #c9d6e6);
    border-right: 1px solid #6b7f96;
  }

  .win-buttons .close {
    width: 45px;
    border: 0;
    background: linear-gradient(#e6a391, #cc3b25 50%, #dc7050);
  }

  .win-buttons svg {
    display: block;
    width: 100%;
  }

  .tabs {
    display: flex;
    align-items: stretch;
    padding-left: 2px;
  }

  .tabs button {
    padding: 3px 10px 0;
    line-height: 16px;
    white-space: nowrap;
  }

  .tabs .active {
    padding-top: 2px;
    margin-top: 1px;
    background: #f6f6f6;
  }

  .tab-toggle {
    align-self: center;
    width: 16px;
    height: 9px;
    margin: 2px 4px 0 20px;
    border: 1px solid #444;
    border-radius: 3px;
    background: #fff;
  }

  .tab-toggle::after {
    content: '';
    display: block;
    width: 0;
    margin: 2px auto;
    border: 3px solid transparent;
    border-top: 0;
    border-bottom-color: #222;
  }

  .tabs .caret {
    align-self: center;
  }

  /* ribbon */
  .ribbon {
    display: flex;
    height: 94px;
    background: linear-gradient(#e6e6e6, #9b9b9b);
    border-bottom: 1px solid #f4f4f4;
  }

  .panels {
    display: flex;
    background: #fbfbfb;
  }

  section {
    display: flex;
    flex-direction: column;
    border-right: 1px solid #d0d0d0;
  }

  .body {
    flex: 1;
    display: flex;
    padding-top: 4px;
  }

  section footer {
    display: flex;
    align-items: center;
    justify-content: center;
    gap: 4px;
    height: 18px;
    padding-top: 2px;
    background: #ebebeb;
    white-space: nowrap;
  }

  .p-select { width: 50px; }
  .p-comm { width: 60px; }
  .p-manage { width: 247px; }
  .p-sync { width: 206px; }
  .p-model { width: 98px; }
  .p-coord { width: 210px; border: 0; }

  .p-sync .body {
    padding-left: 8px;
  }

  .p-model .body,
  .p-coord .body {
    padding-left: 6px;
  }

  .p-select .body {
    padding: 3px 5px 0 6px;
  }

  .modify {
    flex: 1;
    display: flex;
    flex-direction: column;
    align-items: center;
    gap: 9px;
    height: 72px;
    padding-top: 5px;
    border: 1px solid #2f6fb4;
    background: linear-gradient(#b5d6f7, #a5cdf6 50%, #c3def9);
  }

  .modify svg {
    width: 16px;
    height: 24px;
  }

  .big-tool {
    flex: 1;
    display: flex;
    flex-direction: column;
    align-items: center;
    gap: 6px;
    padding-top: 2px;
    white-space: nowrap;
  }

  .p-manage .big-tool {
    flex: 0 0 44px;
  }

  .big-icon {
    width: 31px;
    height: 31px;
    flex: none;
  }

  .off {
    color: #9a9a9a;
  }

  .p-sync .big-tool:last-child {
    flex: 0 0 50px;
  }

  .active-set {
    flex: 1;
    display: flex;
    flex-direction: column;
    padding: 3px 3px 0 0;
    align-items: flex-start;
    min-width: 0;
  }

  .active-set .select {
    margin: 4px 0 7px 4px;
    width: 194px;
  }

  .gray-toggle {
    display: flex;
    gap: 4px;
    padding-left: 3px;
    color: #aaa;
    white-space: nowrap;
  }

  .select {
    position: relative;
    height: 20px;
    border: 1px solid #8a8a8a;
    border-radius: 2px;
    background: linear-gradient(#f4f4f4, #dcdcdc);
  }

  .select::after {
    content: '';
    position: absolute;
    right: 4px;
    top: 8px;
    border: 4px solid transparent;
    border-top-color: #222;
    border-bottom: 0;
    pointer-events: none;
  }

  .select select {
    display: block;
    width: 100%;
    height: 100%;
    padding: 0 3px;
    appearance: none;
  }

  .select.flat {
    background: #fafafa;
    border-color: #ddd;
  }

  .select.plain {
    border: 0;
    border-radius: 0;
    background: #fff;
    color: #777;
  }

  .select.plain::after,
  .select.flat::after {
    border-top-color: #888;
  }

  .options-bar {
    height: 27px;
    flex: none;
    background: #e1e1e1;
  }

  /* work area */
  main {
    flex: 1;
    display: flex;
    min-height: 0;
    background: #f0f0f0;
  }

  .palette-title {
    display: flex;
    align-items: center;
    justify-content: space-between;
    height: 19px;
    padding: 0 4px 0 3px;
    background: linear-gradient(#c9d8e6, #b3c7d9);
    color: #3f5163;
    white-space: nowrap;
  }

  .palette-title button {
    color: #111;
    font-weight: 700;
  }

  .properties {
    flex: 0 0 218px;
    display: flex;
    flex-direction: column;
    min-height: 0;
  }

  .type-selector {
    display: flex;
    align-items: center;
    height: 74px;
    margin-top: 1px;
    padding: 2px 3px;
    border: 1px solid #777;
    border-right-color: #ccc;
    border-bottom-color: #ddd;
    background: #f3f3f3;
  }

  .thumb {
    display: grid;
    place-items: center;
    width: 66px;
    height: 66px;
    border: 1px solid #d4d4d4;
    background: #f8f8f8;
  }

  .thumb svg {
    width: 32px;
    height: 32px;
  }

  .type-name {
    flex: 1;
    padding-left: 4px;
    text-align: left;
  }

  .instance {
    display: flex;
    align-items: flex-start;
    gap: 7px;
    height: 25px;
    flex: none;
    padding-left: 1px;
  }

  .instance .select {
    width: 132px;
    height: 24px;
  }

  .instance .select::after {
    top: 9px;
  }

  .edit-type {
    display: flex;
    gap: 5px;
    align-items: center;
    padding-top: 2px;
    white-space: nowrap;
  }

  .prop-scroll {
    flex: 1;
    display: flex;
    min-height: 0;
  }

  .prop-view {
    flex: 1;
    overflow: hidden;
    background: #fff;
  }

  table {
    width: 100%;
    border-collapse: separate;
    border-spacing: 0;
    table-layout: fixed;
  }

  .prop-view td,
  .prop-view th {
    height: 20px;
    padding: 0;
    white-space: nowrap;
    overflow: hidden;
  }

  .prop-view td {
    border-bottom: 1px dotted #999;
    border-right: 1px dotted #999;
  }

  .prop-view td:first-child {
    padding-left: 11px;
  }

  .prop-view td:last-child {
    padding-left: 2px;
  }

  .prop-view label {
    display: block;
  }

  .prop-view output {
    line-height: 18px;
  }

  .group th {
    padding: 0 8px 0 2px;
    background: #dedede;
    font-weight: 400;
    text-align: left;
  }

  .group span {
    line-height: 16px;
  }

  .group svg {
    float: right;
    width: 8px;
    height: 10px;
    margin-top: 3px;
  }

  .prop-view tr.off label,
  .prop-view tr.off output {
    color: #858585;
  }

  .prop-view input[type='checkbox'] {
    appearance: none;
    display: block;
    width: 13px;
    height: 13px;
    margin: 3px 2px;
    border: 1px solid #8a8a8a;
    background: #f0f0f0;
  }

  .prop-view input[type='checkbox']:disabled {
    border-color: #bbb;
  }

  .cell-button {
    display: block;
    width: 96px;
    height: 18px;
    line-height: 14px;
    border: 1px solid #777;
    border-bottom-width: 2px;
    border-radius: 3px;
    background: linear-gradient(#f4f4f4, #d4d4d4);
  }

  .cell-input {
    display: block;
    width: 96px;
    height: 19px;
    padding-left: 4px;
    border: 1px solid #111;
    background: #fff;
  }

  .vbar {
    flex: 0 0 17px;
    display: flex;
    flex-direction: column;
    align-items: center;
    padding: 7px 0;
    background: #f0f0f0;
  }

  .prop-scroll .vbar {
    flex-basis: 19px;
  }

  .track {
    flex: 1;
    align-self: stretch;
    padding: 7px 1px;
  }

  .track b,
  .hbar b,
  .browser-hbar b {
    display: block;
    border: 1px solid #999;
    border-radius: 2px;
    background: linear-gradient(90deg, #f4f4f4, #d0d0d0);
  }

  .prop-thumb { height: 93%; }
  .tree-thumb { height: 33%; }
  .report-thumb { height: 66%; }

  .vbar.main .track {
    display: flex;
    flex-direction: column;
    justify-content: center;
    padding: 7px 1px;
  }

  .view-thumb { height: 15px; }

  .prop-footer {
    display: flex;
    justify-content: space-between;
    align-items: center;
    height: 24px;
    flex: none;
    padding: 0 3px;
  }

  .prop-footer a {
    color: #0066cc;
  }

  .prop-footer button {
    width: 73px;
    height: 20px;
    border: 1px solid #b5b5b5;
    border-radius: 3px;
    color: #888;
    background: #f4f4f4;
  }

  /* 3D view */
  .view {
    flex: 1;
    display: flex;
    flex-direction: column;
    min-width: 0;
    padding-left: 6px;
  }

  .canvas-row {
    flex: 1;
    display: flex;
    min-height: 0;
  }

  .canvas {
    position: relative;
    flex: 1;
    background: #000;
    overflow: hidden;
  }

  .scene {
    position: absolute;
    inset: 0;
    width: 100%;
    height: 100%;
  }

  .mdi {
    position: absolute;
    top: 6px;
    right: 4px;
    display: flex;
    align-items: center;
    gap: 7px;
    color: #eee;
    font-weight: 700;
  }

  .mdi-min {
    width: 11px;
    height: 3px;
    margin-top: 6px;
    background: #eee;
  }

  .mdi-max {
    width: 9px;
    height: 9px;
    border: 2px solid #eee;
  }

  .mdi-x {
    font-size: 13px;
  }

  .navbar {
    position: absolute;
    top: 201px;
    right: 2px;
    display: flex;
    flex-direction: column;
    align-items: center;
    gap: 11px;
    width: 32px;
    height: 114px;
    border-radius: 3px;
    background: #4c4c4c;
    padding-top: 1px;
  }

  .navbar svg {
    width: 22px;
    height: 22px;
  }

  .navbar hr {
    align-self: stretch;
    margin: 0;
    border: 0;
    border-top: 1px solid #3a3a3a;
  }

  .nav-x {
    align-self: flex-end;
    padding-right: 3px;
    font-size: 8px;
    line-height: 8px;
    color: #ccc;
  }

  .view-bar {
    display: flex;
    align-items: center;
    gap: 5px;
    height: 18px;
    flex: none;
    padding-right: 24px;
    background: #f0f0f0;
  }

  .scale {
    display: flex;
    gap: 7px;
    padding: 0 10px 0 21px;
  }

  .hbar {
    flex: 1;
    padding-right: 2px;
  }

  .hbar b {
    width: 15px;
    height: 15px;
    margin: 0 auto;
  }

  /* project browser */
  .browser {
    flex: 0 0 211px;
    display: flex;
    flex-direction: column;
    min-width: 0;
    min-height: 0;
    margin-left: 6px;
  }

  .browser .palette-title {
    padding: 0 4px 0 2px;
  }

  .browser-body {
    flex: 1;
    display: flex;
    min-height: 0;
    border-top: 1px solid #888;
    border-left: 1px solid #888;
    background: #fff;
  }

  .tree {
    flex: 1;
    overflow: hidden;
    padding-top: 1px;
  }

  .tree-row {
    display: flex;
    align-items: center;
    height: 20px;
    white-space: nowrap;
  }

  .cell {
    flex: 0 0 20px;
    position: relative;
    height: 20px;
  }

  .cell.line::before,
  .cell.node.top::before {
    content: '';
    position: absolute;
    left: 9px;
    top: 0;
    height: 20px;
    border-left: 1px solid #b4b4b4;
  }

  .cell.node.last::before {
    height: 10px;
  }

  .cell.node::after {
    content: '';
    position: absolute;
    left: 10px;
    top: 10px;
    width: 13px;
    border-top: 1px dotted #999;
  }

  .exp {
    position: absolute;
    z-index: 1;
    left: 5px;
    top: 6px;
    width: 9px;
    height: 9px;
    border: 1px solid #8c8c8c;
    background: #fff;
    font-size: 9px;
    line-height: 7px;
  }

  .row-icon {
    margin-left: 2px;
  }

  .row-text {
    padding: 0 4px;
    margin-left: 3px;
    line-height: 18px;
  }

  .row-text.root {
    background: #e4e4e4;
  }

  .strong {
    font-weight: 700;
  }

  .browser-hbar {
    display: flex;
    align-items: center;
    justify-content: space-between;
    height: 18px;
    flex: none;
    padding: 0 24px 0 8px;
  }

  .browser-hbar b {
    width: 102px;
    height: 15px;
    margin-right: 52px;
    font-size: 8px;
    line-height: 12px;
    text-align: center;
    color: #666;
  }

  /* status bar */
  .status {
    display: flex;
    align-items: center;
    gap: 9px;
    flex: none;
    height: 23px;
    padding: 0 84px 0 2px;
    border-top: 1px solid #777;
    border-bottom: 1px solid #5b7ea6;
    background: linear-gradient(#e0e0e0, #c4c4c4);
  }

  .message {
    flex: 0 0 703px;
    white-space: nowrap;
  }

  .ws { width: 204px; }
  .opt { width: 155px; }

  .count {
    display: flex;
    align-items: center;
    gap: 3px;
    padding-right: 14px;
  }

  .picks {
    display: flex;
    align-items: center;
    gap: 8px;
    margin-left: auto;
  }

  .picks .count {
    padding: 0;
    gap: 2px;
  }

  .picks button {
    position: relative;
    width: 18px;
  }

  .pointer {
    position: absolute;
    right: 0;
    bottom: 0;
    width: 8px;
    height: 12px;
  }

  /* interference report window */
  .dialog {
    position: absolute;
    left: 318px;
    top: 100px;
    width: 825px;
    padding: 0 6px 6px;
    border: 1px solid #27394d;
    border-radius: 7px;
    background: linear-gradient(100deg, #d3e4f6, #b3d0ec 10%, #b3d2ea 85%, #cfe0f5 92%);
    box-shadow: 0 0 0 1px #e9f3fc inset, 0 3px 16px 4px rgba(0, 0, 0, 0.65);
  }

  h2 {
    margin: 0;
    padding: 6px 2px 6px 1px;
    font-size: 12px;
    line-height: 16px;
    font-weight: 400;
    color: #111;
  }

  .dlg-body {
    padding: 8px 8px 11px 10px;
    border: 1px solid #5c6f82;
    background: #efefef;
  }

  .group-by {
    display: flex;
    align-items: flex-start;
  }

  .group-by label {
    width: 125px;
  }

  .group-by .select {
    width: 135px;
  }

  .report {
    display: flex;
    margin-top: 10px;
  }

  .report table {
    flex: 1;
  }

  .report th {
    height: 20px;
    padding: 0 97px 0 0;
    border-bottom: 1px solid #777;
    background: linear-gradient(#f8f8f8, #ececec);
    font-weight: 400;
    text-align: right;
    line-height: 16px;
  }

  .report td {
    height: 20px;
    padding: 0;
    border-bottom: 1px solid #999;
    background: #fff;
  }

  .report .tree-row {
    height: 19px;
  }

  .report .cell {
    height: 19px;
  }

  .report .row-text {
    flex: 1;
    padding-left: 3px;
  }

  .selected .row-text {
    background: #3399ff;
    color: #fff;
  }

  dl {
    display: grid;
    grid-template-columns: 126px 1fr;
    row-gap: 2px;
    margin: 17px 0 2px;
  }

  dd {
    margin: 0;
  }

  .note {
    display: flex;
    gap: 9px;
    margin: 0;
    padding-left: 96px;
    line-height: 20px;
  }

  .actions {
    display: flex;
    gap: 8px;
    margin-top: 10px;
    padding: 0 2px;
  }

  .actions button {
    width: 88px;
    height: 21px;
    line-height: 17px;
    border: 1px solid #777;
    border-radius: 3px;
    background: linear-gradient(#f5f5f5, #dadada);
  }

  .actions .dlg-close {
    margin-left: auto;
  }

  .watermark {
    position: absolute;
    right: 54px;
    bottom: 46px;
    display: flex;
    align-items: center;
    gap: 7px;
    font-size: 40px;
    line-height: 54px;
    color: #fff;
    text-shadow: 1px 1px 1px #666, -1px 0 1px #888;
    pointer-events: none;
  }

  .watermark svg {
    width: 62px;
    height: 54px;
  }
</style>
